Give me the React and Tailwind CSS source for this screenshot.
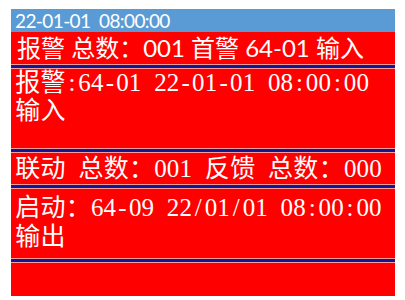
import React from "react";

const serif = { fontFamily: '"Liberation Serif", "Noto Sans CJK SC", serif' };

function Cells({ text }) {
  return (
    <span className="whitespace-pre">
      {Array.from(text).map((ch, i) =>
        ch.charCodeAt(0) > 0x2000 ? (
          <span key={i} className="inline-block w-[25.3px] text-center">
            {ch}
          </span>
        ) : (
          <span key={i} className="inline-block w-[12.65px] text-center">
            {ch}
          </span>
        )
      )}
    </span>
  );
}

function Divider() {
  return (
    <div className="flex flex-col">
      <div className="h-px bg-[#ff9a9a]" />
      <div className="h-[3px] bg-[#0a1a94]" />
      <div className="h-px bg-[#ff9a9a]" />
    </div>
  );
}

export default function App() {
  return (
    <div className="w-[405px] h-[300px] bg-white pt-[9px] pl-[11px]">
      <div className="w-[384px] flex flex-col">
        <div
          className="h-[23px] bg-[#5b9bd5] text-white text-[19px] leading-[23px] pl-[4px] whitespace-pre tracking-[-0.6px]"
          style={{ fontFamily: '"Lato", "Noto Sans", sans-serif' }}
        >
          22-01-01  08:00:00
        </div>
        <div
          className="h-[32px] bg-[#ff0000] text-white text-[24px] leading-[32px] pl-[6px] whitespace-pre"
          style={{ fontFamily: '"Lato", "Noto Sans CJK SC", sans-serif' }}
        >
          报警 总数：001 首警 64-01 输入
        </div>
        <Divider />
        <div
          className="h-[79px] bg-[#ff0000] text-white text-[25px] leading-[28px] pl-[4px]"
          style={serif}
        >
          <div>
            <Cells text="报警:64-01 22-01-01 08:00:00" />
          </div>
          <div>
            <Cells text="输入" />
          </div>
        </div>
        <Divider />
        <div
          className="h-[31px] bg-[#ff0000] text-white text-[25px] leading-[31px] pl-[4px]"
          style={serif}
        >
          <Cells text="联动 总数：001 反馈 总数：000" />
        </div>
        <Divider />
        <div
          className="h-[69px] bg-[#ff0000] text-white text-[25px] leading-[29px] pl-[4px] pt-[4px]"
          style={serif}
        >
          <div>
            <Cells text="启动：64-09 22/01/01 08:00:00" />
          </div>
          <div>
            <Cells text="输出" />
          </div>
        </div>
        <Divider />
        <div className="h-[33px] bg-[#ff0000]" />
      </div>
    </div>
  );
}
